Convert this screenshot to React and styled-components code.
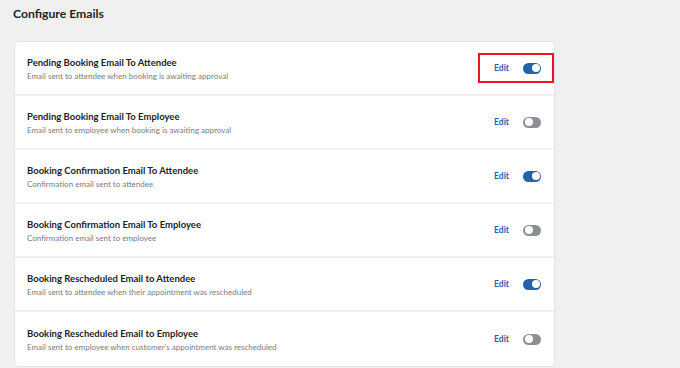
import React, { useState } from 'react';
import styled, { createGlobalStyle } from 'styled-components';

const GlobalStyle = createGlobalStyle`
  body {
    margin: 0;
    background: #f0f0f1;
    font-family: Lato, "Open Sans", sans-serif;
  }
`;

const emails = [
  { title: 'Pending Booking Email To Attendee', desc: 'Email sent to attendee when booking is awaiting approval', on: true, marked: true },
  { title: 'Pending Booking Email To Employee', desc: 'Email sent to employee when booking is awaiting approval', on: false },
  { title: 'Booking Confirmation Email To Attendee', desc: 'Confirmation email sent to attendee', on: true },
  { title: 'Booking Confirmation Email To Employee', desc: 'Confirmation email sent to employee', on: false },
  { title: 'Booking Rescheduled Email to Attendee', desc: 'Email sent to attendee when their appointment was rescheduled', on: true },
  { title: 'Booking Rescheduled Email to Employee', desc: "Email sent to employee when customer's appointment was rescheduled", on: false },
];

const App = () => {
  const [states, setStates] = useState(emails.map((e) => e.on));

  const flip = (i) => {
    setStates(states.map((s, j) => (j === i ? !s : s)));
  };

  return (
    <Page>
      <GlobalStyle />
      <Heading>Configure Emails</Heading>
      <Card>
        {emails.map((email, i) => (
          <Row key={email.title}>
            <Text>
              <RowTitle>{email.title}</RowTitle>
              <RowDesc>{email.desc}</RowDesc>
            </Text>
            <Actions $marked={email.marked}>
              <EditLink href="#">Edit</EditLink>
              <Toggle $on={states[i]} onClick={() => flip(i)} aria-label="toggle" />
            </Actions>
          </Row>
        ))}
      </Card>
    </Page>
  );
};

export default App;

const Page = styled.div`
  padding: 5px 0 0 14px;
  height: 363px;
  overflow: hidden;
`;

const Heading = styled.h1`
  margin: 0 0 18px -1px;
  font-size: 12.2px;
  line-height: 18px;
  font-weight: 700;
  color: #1d2327;
`;

const Card = styled.div`
  width: 541px;
  background: #fff;
  border: 1px solid #e3e3e5;
  border-radius: 4px;
  box-sizing: border-box;
`;

const Row = styled.div`
  height: 54px;
  display: flex;
  align-items: center;
  justify-content: space-between;
  padding: 0 13px 0 12px;
  border-bottom: 2px solid #f0f0f1;
  box-sizing: border-box;

  &:last-child {
    border-bottom: none;
  }
`;

const Text = styled.div`
  display: flex;
  flex-direction: column;
  gap: 2px;
  padding-top: 1px;
`;

const RowTitle = styled.div`
  font-size: 9.5px;
  line-height: 13px;
  font-weight: 700;
  color: #1d2327;
`;

const RowDesc = styled.div`
  font-size: 8px;
  line-height: 11px;
  color: #787c82;
`;

const Actions = styled.div`
  position: relative;
  display: flex;
  align-items: center;
  gap: 14px;

  &::after {
    content: '';
    display: ${(p) => (p.$marked ? 'block' : 'none')};
    position: absolute;
    top: -10px;
    bottom: -9px;
    left: -16px;
    right: -13px;
    border: 2px solid #e8171f;
  }
`;

const EditLink = styled.a`
  font-size: 8.5px;
  font-weight: 700;
  color: #2266aa;
  text-decoration: none;
`;

const Toggle = styled.button`
  position: relative;
  width: 18px;
  height: 11px;
  padding: 0;
  border: none;
  border-radius: 6px;
  background: ${(p) => (p.$on ? '#1f64ad' : '#8c8f94')};
  cursor: pointer;

  &::before {
    content: '';
    position: absolute;
    top: 1.5px;
    left: ${(p) => (p.$on ? '8.5px' : '1.5px')};
    width: 8px;
    height: 8px;
    border-radius: 50%;
    background: #fff;
  }
`;
